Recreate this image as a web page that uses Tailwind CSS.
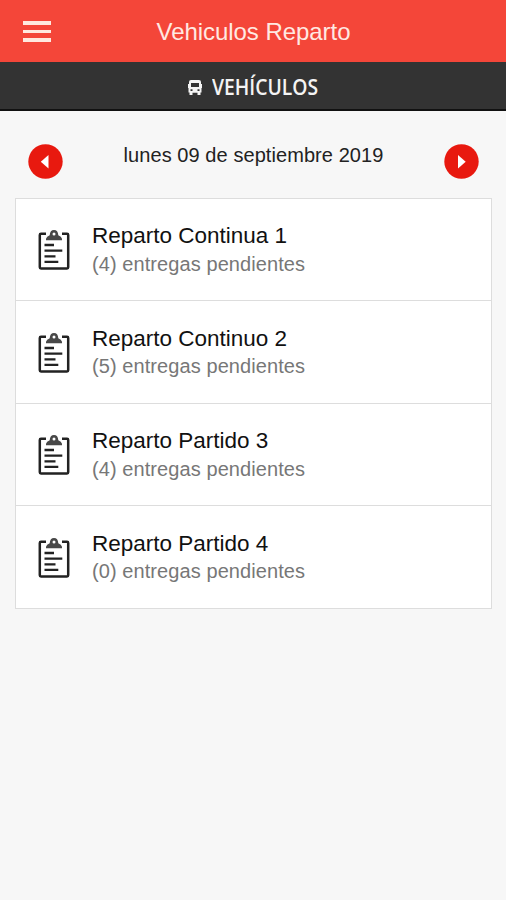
<!DOCTYPE html>
<html lang="es">
<head>
<meta charset="utf-8">
<title>Vehiculos Reparto</title>
<script src="https://cdn.jsdelivr.net/npm/@tailwindcss/browser@4"></script>
</head>
<body class="bg-[#f7f7f7] min-h-screen overflow-hidden font-['Liberation_Sans',Arial,sans-serif]">
<svg class="hidden">
  <symbol id="clip" viewBox="0 0 34 42">
    <path d="M9 4.800H4Q2.800 4.800 2.800 6V38.200Q2.800 39.400 4 39.400H30Q31.200 39.400 31.200 38.200V6Q31.200 4.800 30 4.800H25" fill="none" stroke="#222" stroke-width="2.500"/>
    <path fill-rule="evenodd" d="M9 11.300V9.800Q9.500 7.300 12.700 6.300Q13 1 17 1Q21 1 21.300 6.300Q24.500 7.300 25 9.800V11.300ZM17 3.600A1.500 1.500 0 1 0 17 6.600A1.500 1.500 0 1 0 17 3.600Z" fill="#484848"/>
    <path d="M7.500 16H17M7.500 21.700H25.300M7.500 27.300H18.500M7.500 32.900H21.300" stroke="#222" stroke-width="2.300"/>
  </symbol>
</svg>
<header class="h-[62px] bg-[#f44639] grid grid-cols-[80px_1fr_80px] items-center">
  <button class="ml-[23px] w-[28px] flex flex-col gap-[5px] pt-px" aria-label="Menú">
    <span class="block h-[3.500px] bg-[#ffe9df]"></span><span class="block h-[3.500px] bg-[#ffe9df]"></span><span class="block h-[3.500px] bg-[#ffe9df]"></span>
  </button>
  <h1 class="text-center text-[24px] leading-[28px] text-[#ffe9e2] whitespace-nowrap tracking-[-0.050px] pt-px pl-px">Vehiculos Reparto</h1>
</header>
<div class="h-[49px] bg-[#333] border-b-2 border-[#111] flex items-center justify-center gap-[10px] pt-[3px]">
  <svg class="w-[14px] h-[15px]" viewBox="0 0 14 15"><path fill="#f4f4f4" fill-rule="evenodd" d="M3 0H11Q13 0 13 2V4H14V8H13.500V12.500H12.500V15H9.500V12.800H4.500V15H1.500V12.500H.5V8H0V4H1V2Q1 0 3 0ZM3 3V7H11V3ZM2.500 9.200V11H4.500V9.200ZM9.500 9.200V11H11.500V9.200Z"/></svg>
  <h2 class="w-[106px] font-['Open_Sans','Noto_Sans',sans-serif] font-semibold text-[21px] leading-[28px] text-[#f4f4f4] whitespace-nowrap"><span class="inline-block origin-left scale-x-[0.920]">VEHÍCULOS</span></h2>
</div>
<main class="px-[15px]">
  <div class="h-[87px] pl-[13px] pr-[12px] flex justify-between">
    <svg class="w-[35px] h-[35px] mt-[33px]" viewBox="0 0 35 35"><circle cx="17.500" cy="17.500" r="17.200" fill="#e8190f"/><path d="M20.500 11V24.500L12.800 17.800Z" fill="#fff"/></svg>
    <p class="mt-[32px] text-[20px] leading-[24px] tracking-[0.070px] text-[#222] whitespace-nowrap">lunes 09 de septiembre 2019</p>
    <svg class="w-[35px] h-[35px] mt-[33px]" viewBox="0 0 35 35"><circle cx="17.500" cy="17.500" r="17.200" fill="#e8190f"/><path d="M14 11V24.500L21.700 17.800Z" fill="#fff"/></svg>
  </div>
  <ul class="w-[477px] h-[411px] bg-white border border-[#ddd] grid grid-rows-4 divide-y divide-[#ddd]">
    <li class="flex pl-[21px] pt-[23.400px] gap-[21px]"><svg class="w-[34px] h-[42px] mt-[7px]"><use href="#clip"/></svg><div class="whitespace-nowrap"><h3 class="text-[22.500px] leading-[28px] text-[#111]">Reparto Continua 1</h3><p class="text-[20px] leading-[28px] tracking-[0.080px] text-[#777]">(4) entregas pendientes</p></div></li>
    <li class="flex pl-[21px] pt-[23.400px] gap-[21px]"><svg class="w-[34px] h-[42px] mt-[7px]"><use href="#clip"/></svg><div class="whitespace-nowrap"><h3 class="text-[22.500px] leading-[28px] text-[#111]">Reparto Continuo 2</h3><p class="text-[20px] leading-[27px] tracking-[0.080px] text-[#777]">(5) entregas pendientes</p></div></li>
    <li class="flex pl-[21px] pt-[23.400px] gap-[21px]"><svg class="w-[34px] h-[42px] mt-[7px]"><use href="#clip"/></svg><div class="whitespace-nowrap"><h3 class="text-[22.500px] leading-[28px] text-[#111]">Reparto Partido 3</h3><p class="text-[20px] leading-[28px] tracking-[0.080px] text-[#777]">(4) entregas pendientes</p></div></li>
    <li class="flex pl-[21px] pt-[24.200px] gap-[21px]"><svg class="w-[34px] h-[42px] mt-[7px]"><use href="#clip"/></svg><div class="whitespace-nowrap"><h3 class="text-[22.500px] leading-[28px] text-[#111]">Reparto Partido 4</h3><p class="text-[20px] leading-[27px] tracking-[0.080px] text-[#777]">(0) entregas pendientes</p></div></li>
  </ul>
</main>
</body>
</html>
